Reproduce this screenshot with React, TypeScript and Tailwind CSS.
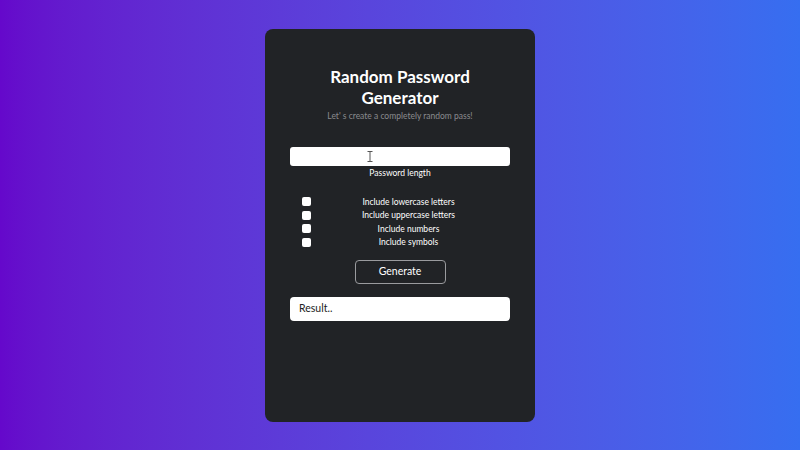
import { useState } from 'react';

const OPTIONS = [
  'Include lowercase letters',
  'Include uppercase letters',
  'Include numbers',
  'Include symbols',
];

export default function App() {
  const [checked, setChecked] = useState<boolean[]>([false, false, false, false]);

  return (
    <div
      className="w-[800px] h-[450px] flex items-start justify-center pt-[29px] bg-gradient-to-r from-[#6508cb] to-[#366ef0]"
      style={{ fontFamily: 'Lato, "Noto Sans", sans-serif' }}
    >
      <div className="w-[270px] h-[393px] bg-[#212326] rounded-[8px] flex flex-col items-center px-[25px]">
        <h1 className="mt-[37px] text-white font-bold text-[17px] leading-[21px] text-center">
          Random Password
          <br />
          Generator
        </h1>
        <p className="mt-[2px] text-[8.5px] leading-[12px] text-[#8a8b8e] text-center">
          Let' s create a completely random pass!
        </p>

        <div className="relative mt-[25px] w-[220px] h-[19px] bg-white rounded-[3px]">
          <svg
            className="absolute left-[77px] top-[4px]"
            width="6"
            height="11"
            viewBox="0 0 6 11"
          >
            <path d="M0.5 0.5h5M3 0.5v10M0.5 10.5h5" stroke="#555" strokeWidth="1" fill="none" />
          </svg>
        </div>
        <div className="mt-[1px] text-white text-[8.5px] leading-[12px]">Password length</div>

        <div className="mt-[16px] w-[220px] flex flex-col">
          {OPTIONS.map((label, i) => (
            <label key={label} className="flex items-center h-[13.5px] pl-[12px] pr-[4px]">
              <button
                type="button"
                onClick={() => setChecked((c) => c.map((v, j) => (j === i ? !v : v)))}
                className="w-[9px] h-[9px] rounded-[2px] bg-white shrink-0"
              />
              <span className="flex-1 text-center text-white text-[8.5px] leading-[12px]">{label}</span>
            </label>
          ))}
        </div>

        <button
          type="button"
          className="mt-[11px] w-[91px] h-[24px] rounded-[4px] border border-[#9a9b9e] text-white text-[10.5px]"
        >
          Generate
        </button>

        <div className="mt-[13px] w-[220px] h-[24px] bg-white rounded-[4px] flex items-center px-[9px] text-[10.5px] text-[#222]">
          Result..
        </div>
      </div>
    </div>
  );
}
